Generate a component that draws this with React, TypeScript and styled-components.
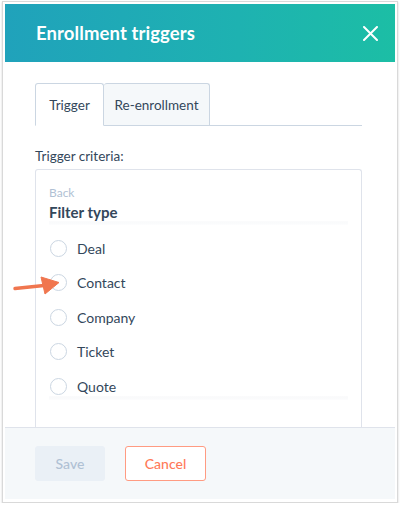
import React from 'react'
import styled, { createGlobalStyle } from 'styled-components'

const GlobalStyle = createGlobalStyle`
  html, body {
    margin: 0;
    padding: 0;
    background: #ffffff;
  }
  body {
    font-family: Lato, "Open Sans", "Liberation Sans", sans-serif;
    color: #33475b;
    -webkit-font-smoothing: antialiased;
  }
`

const Frame = styled.div`
  position: relative;
  box-sizing: border-box;
  width: 396px;
  height: 502px;
  margin: 1px 0 0 2px;
  padding: 2px 2px 3px 2px;
  border: 1px solid #d9d9d9;
  box-shadow: 0 1px 2px rgba(0, 0, 0, 0.18);
  display: flex;
  flex-direction: column;
`

const Header = styled.div`
  height: 58px;
  flex: none;
  display: flex;
  align-items: center;
  justify-content: space-between;
  padding: 0 17px 0 31px;
  background: linear-gradient(90deg, #20a2bb 0%, #1eb2b1 60%, #1cbea5 100%);
`

const Title = styled.h1`
  margin: 0;
  font-size: 18.5px;
  font-weight: 700;
  color: #ffffff;
  letter-spacing: 0.1px;
`

const CloseButton = styled.button`
  width: 16px;
  height: 16px;
  padding: 0;
  border: 0;
  background: none;
  display: flex;
  align-items: center;
  justify-content: center;
  cursor: pointer;
`

const Body = styled.div`
  flex: 1;
  display: flex;
  flex-direction: column;
  padding: 21px 33px 0 30px;
  min-height: 0;
`

const Tabs = styled.div`
  display: flex;
  border-bottom: 1px solid #cbd6e2;
  height: 42px;
`

const Tab = styled.div<{ $active?: boolean }>`
  box-sizing: border-box;
  height: ${(p) => (p.$active ? '43px' : '42px')};
  display: flex;
  align-items: center;
  justify-content: center;
  white-space: nowrap;
  font-size: 13.5px;
  color: #33475b;
  background: ${(p) => (p.$active ? '#ffffff' : '#f5f8fa')};
  border: 1px solid #cbd6e2;
  border-bottom: ${(p) => (p.$active ? '1px solid #ffffff' : '0')};
  border-left-width: ${(p) => (p.$active ? '1px' : '0')};
  border-radius: 3px 3px 0 0;
  width: ${(p) => (p.$active ? '69px' : '106px')};
`

const Label = styled.div`
  margin-top: 21px;
  font-size: 13.5px;
  line-height: 18px;
`

const CriteriaBox = styled.div`
  flex: 1;
  margin-top: 4px;
  border: 1px solid #dfe3eb;
  border-bottom: 0;
  border-radius: 3px 3px 0 0;
  padding: 15px 13px 0 13px;
`

const Back = styled.div`
  font-size: 12px;
  line-height: 16px;
  color: #b0c1d4;
`

const Heading = styled.div`
  margin-top: 2px;
  font-size: 15px;
  font-weight: 700;
  line-height: 18px;
  color: #33475b;
`

const ScrollShade = styled.div<{ $offset?: number }>`
  height: 4px;
  margin-top: ${(p) => p.$offset ?? 0}px;
  background: linear-gradient(180deg, #fbfbfc, #f9fafb, #fdfdfe);
`

const OptionList = styled.div`
  display: flex;
  flex-direction: column;
  margin-top: 6px;
`

const Option = styled.label`
  height: 34.5px;
  display: flex;
  align-items: center;
  gap: 10px;
  font-size: 14px;
  color: #33475b;
  padding-left: 1px;
`

const Radio = styled.span`
  box-sizing: border-box;
  width: 17px;
  height: 17px;
  border-radius: 50%;
  border: 1.5px solid #cbd6e2;
  background: #ffffff;
`

const Footer = styled.div`
  height: 72px;
  flex: none;
  box-sizing: border-box;
  display: flex;
  align-items: center;
  gap: 20px;
  padding: 0 0 1px 30px;
  background: #f5f8fa;
  border-top: 1px solid #dfe3eb;
`

const Button = styled.button<{ $variant: 'disabled' | 'secondary' }>`
  box-sizing: border-box;
  height: 35px;
  border-radius: 3px;
  font-family: inherit;
  font-size: 14px;
  font-weight: 500;
  padding: 0;
  width: ${(p) => (p.$variant === 'disabled' ? '70px' : '81px')};
  background: ${(p) => (p.$variant === 'disabled' ? '#eaf0f6' : '#ffffff')};
  color: ${(p) => (p.$variant === 'disabled' ? '#b0c1d4' : '#ff7a59')};
  border: 1px solid ${(p) => (p.$variant === 'disabled' ? '#eaf0f6' : '#ff9b82')};
`

const Pointer = styled.svg`
  position: absolute;
  left: 9px;
  top: 270px;
`

const options = ['Deal', 'Contact', 'Company', 'Ticket', 'Quote']

export default function App() {
  return (
    <>
      <GlobalStyle />
      <Frame>
        <Header>
          <Title>Enrollment triggers</Title>
          <CloseButton aria-label="Close">
            <svg width="15" height="15" viewBox="0 0 15 15">
              <path d="M1 1 L14 14 M14 1 L1 14" stroke="#ffffff" strokeWidth="2" strokeLinecap="round" />
            </svg>
          </CloseButton>
        </Header>
        <Body>
          <Tabs>
            <Tab $active>Trigger</Tab>
            <Tab>Re-enrollment</Tab>
          </Tabs>
          <Label>Trigger criteria:</Label>
          <CriteriaBox>
            <Back>Back</Back>
            <Heading>Filter type</Heading>
            <ScrollShade />
            <OptionList>
              {options.map((o) => (
                <Option key={o}>
                  <Radio />
                  {o}
                </Option>
              ))}
            </OptionList>
            <ScrollShade $offset={-8} />
          </CriteriaBox>
        </Body>
        <Footer>
          <Button $variant="disabled">Save</Button>
          <Button $variant="secondary">Cancel</Button>
        </Footer>
        <Pointer width="50" height="26" viewBox="0 0 50 26">
          <path d="M3 16.5 L32 13.5" stroke="#f0764f" strokeWidth="3.4" strokeLinecap="round" />
          <path d="M29 5 L47 10.5 L33 22 Z" fill="#f0764f" strokeLinejoin="round" stroke="#f0764f" strokeWidth="1" />
        </Pointer>
      </Frame>
    </>
  )
}
